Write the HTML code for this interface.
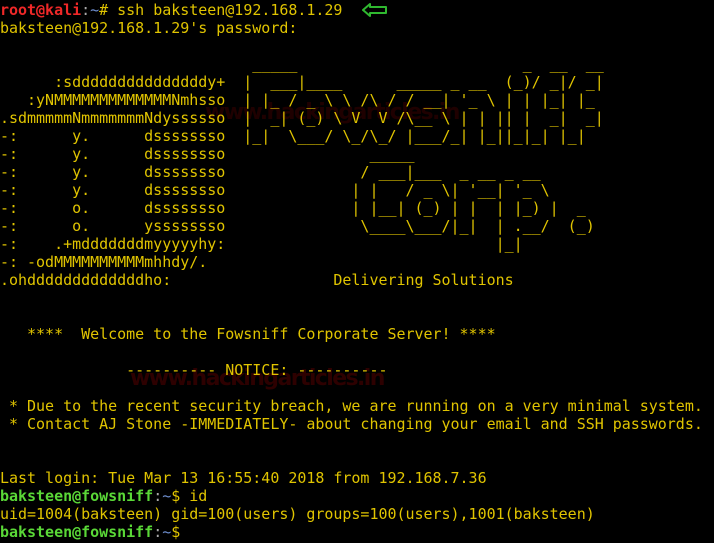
<!DOCTYPE html>
<html><head><meta charset="utf-8"><style>
html,body{margin:0;padding:0;background:#000;width:714px;height:543px;overflow:hidden}
pre{margin:0;position:absolute;left:0px;top:1px;font-family:"DejaVu Sans Mono","Liberation Mono",monospace;font-size:15px;line-height:18px;color:#e0c400;white-space:pre;letter-spacing:-0.02px}
.r{color:#f02828;font-weight:bold}
.g{color:#5ad837;font-weight:bold}
.b{color:#6f8fd0}
.w{color:#aaa}
.wm{position:absolute;font-family:"DejaVu Sans","Liberation Sans",sans-serif;font-weight:bold;color:#5a0000;opacity:.5;white-space:nowrap}
</style></head><body>
<div class="wm" style="left:130px;top:366px;font-size:22px;letter-spacing:-1.6px">www.hackingarticles.in</div>
<div class="wm" style="left:205px;top:100px;font-size:22px;letter-spacing:-1.6px;opacity:.35">www.hackingarticles.in</div>
<pre><span class="r">root@kali</span><span class="w">:</span><span class="b">~</span># ssh baksteen@192.168.1.29
baksteen@192.168.1.29's password:

                            _____                         _  __  __
      :sdddddddddddddddy+  |  ___|____      _____ _ __  (_)/ _|/ _|
   :yNMMMMMMMMMMMMMNmhsso  | |_ / _ \ \ /\ / / __| '_ \ | | |_| |_
.sdmmmmmNmmmmmmmNdyssssso  |  _| (_) \ V  V /\__ \ | | || |  _|  _|
-:      y.      dssssssso  |_|  \___/ \_/\_/ |___/_| |_||_|_| |_|
-:      y.      dssssssso                _____
-:      y.      dssssssso               / ___|___  _ __ _ __
-:      y.      dssssssso              | |   / _ \| '__| '_ \
-:      o.      dssssssso              | |__| (_) | |  | |_) |  _
-:      o.      yssssssso               \____\___/|_|  | .__/  (_)
-:    .+mdddddddmyyyyyhy:                              |_|
-: -odMMMMMMMMMMmhhdy/.
.ohdddddddddddddho:                  Delivering Solutions


   ****  Welcome to the Fowsniff Corporate Server! ****

              ---------- NOTICE: ----------

 * Due to the recent security breach, we are running on a very minimal system.
 * Contact AJ Stone -IMMEDIATELY- about changing your email and SSH passwords.


Last login: Tue Mar 13 16:55:40 2018 from 192.168.7.36
<span class="g">baksteen@fowsniff</span><span class="w">:</span><span class="b">~</span>$ id
uid=1004(baksteen) gid=100(users) groups=100(users),1001(baksteen)
<span class="g">baksteen@fowsniff</span><span class="w">:</span><span class="b">~</span>$</pre>
<svg style="position:absolute;left:362px;top:3px" width="26" height="14" viewBox="0 0 26 14"><path d="M1 7 L8 1 L8 4 L24 4 L24 10 L8 10 L8 13 Z" fill="none" stroke="#2fb82f" stroke-width="2" stroke-linejoin="round"/></svg>
</body></html>
